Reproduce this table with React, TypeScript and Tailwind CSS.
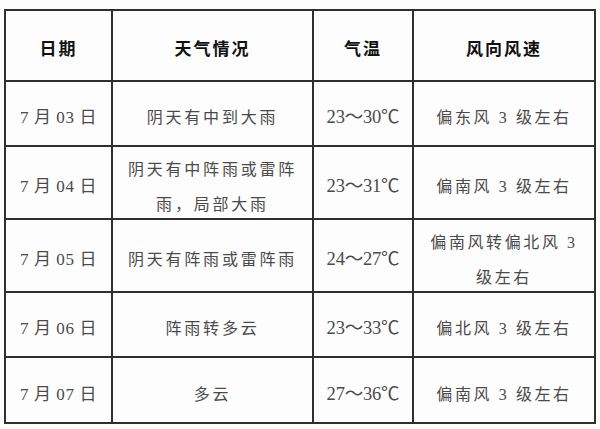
import React from 'react';

type Row = {
  date: string;
  weather: string[];
  temp: string;
  wind: string[];
  h: string;
};

// 未来五天天气预报
const ROWS: Row[] = [
  { date: '7 月 03 日', weather: ['阴天有中到大雨'], temp: '23～30℃', wind: ['偏东风 3 级左右'], h: 'h-[63px]' },
  { date: '7 月 04 日', weather: ['阴天有中阵雨或雷阵', '雨，局部大雨'], temp: '23～31℃', wind: ['偏南风 3 级左右'], h: 'h-[71px]' },
  { date: '7 月 05 日', weather: ['阴天有阵雨或雷阵雨'], temp: '24～27℃', wind: ['偏南风转偏北风 3', '级左右'], h: 'h-[71px]' },
  { date: '7 月 06 日', weather: ['阵雨转多云'], temp: '23～33℃', wind: ['偏北风 3 级左右'], h: 'h-[63px]' },
  { date: '7 月 07 日', weather: ['多云'], temp: '27～36℃', wind: ['偏南风 3 级左右'], h: 'h-[64px]' },
];

const cell = 'border-2 border-[#2f2f2f] text-center align-middle p-0';

const Box: React.FC<{ h: string; lines: string[]; className?: string }> = ({ h, lines, className }) => (
  <div className={`${h} flex flex-col items-center justify-center pt-[8px] leading-[35px] ${className ?? ''}`}>
    {lines.map((l) => (
      <span key={l} className="whitespace-nowrap">{l}</span>
    ))}
  </div>
);

const App: React.FC = () => {
  return (
    <div
      className="w-[600px] h-[429px] bg-[#fdfdfd] overflow-hidden pt-[9px] pl-[4px]"
      style={{ fontFamily: '"Liberation Serif", "Noto Sans CJK SC", serif' }}
    >
      <table className="table-fixed border-collapse w-[592px]">
        <colgroup>
          <col className="w-[107px]" />
          <col className="w-[201px]" />
          <col className="w-[100px]" />
          <col className="w-[182px]" />
        </colgroup>
        <thead>
          <tr className="text-[17px] font-bold text-[#111] tracking-[2px]">
            <th className={cell}><Box h="h-[69px]" lines={['日期']} className="pt-[4px]" /></th>
            <th className={cell}><Box h="h-[69px]" lines={['天气情况']} className="pt-[4px]" /></th>
            <th className={cell}><Box h="h-[69px]" lines={['气温']} className="pt-[4px]" /></th>
            <th className={cell}><Box h="h-[69px]" lines={['风向风速']} className="pt-[4px]" /></th>
          </tr>
        </thead>
        <tbody className="text-[16px] text-[#4a4a4a]">
          {ROWS.map((r) => (
            <tr key={r.date}>
              <td className={`${cell} text-[17px] tracking-[0.6px]`}>
                <Box h={r.h} lines={[r.date]} />
              </td>
              <td className={`${cell} tracking-[2.8px]`}>
                <Box h={r.h} lines={r.weather} />
              </td>
              <td className={`${cell} text-[18.5px] tracking-[-0.2px]`}>
                <Box h={r.h} lines={[r.temp]} />
              </td>
              <td className={`${cell} tracking-[2.6px]`}>
                <Box h={r.h} lines={r.wind} />
              </td>
            </tr>
          ))}
        </tbody>
      </table>
    </div>
  );
};

export default App;
